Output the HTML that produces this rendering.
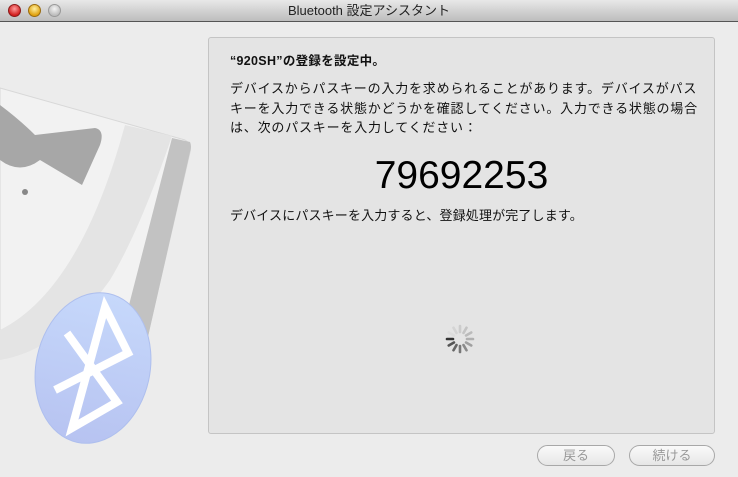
<!DOCTYPE html>
<html><head><meta charset="utf-8"><style>
*{margin:0;padding:0;box-sizing:border-box}
body{width:738px;height:477px;overflow:hidden;background:#ececec;font-family:"Liberation Sans","Noto Sans CJK JP",sans-serif;position:relative}
.tb{position:absolute;left:0;top:0;width:738px;height:22px;background:linear-gradient(#e8e8e8,#bdbdbd);border-bottom:1px solid #555;text-align:center;font-size:13px;line-height:22px;color:#222}
.dot{position:absolute;top:4px;width:13px;height:13px;border-radius:50%}
.panel{position:absolute;left:208px;top:37px;width:507px;height:397px;background:#e4e4e4;border:1px solid #c4c4c4;border-radius:3px}
.t{position:absolute;left:230px;font-size:13px;color:#111;white-space:nowrap;letter-spacing:0.8px}
.btn{position:absolute;top:445px;height:21px;border:1px solid #a8a8a8;border-radius:11px;background:linear-gradient(#fafafa,#e6e6e6);text-align:center;font-size:13px;line-height:19px;color:#999}
</style></head><body>
<div class="tb">Bluetooth 設定アシスタント</div>
<div class="dot" style="left:8px;background:radial-gradient(circle at 50% 35%,#ff9c9c,#d21f1f 70%);border:1px solid #8b1a1a"></div>
<div class="dot" style="left:28px;background:radial-gradient(circle at 50% 35%,#fff0a0,#e0a210 70%);border:1px solid #9a6c10"></div>
<div class="dot" style="left:48px;background:radial-gradient(circle at 50% 35%,#f4f4f4,#bdbdbd 70%);border:1px solid #999"></div>
<svg style="position:absolute;left:0;top:60px" width="208" height="417">
<defs><linearGradient id="bg" x1="0" y1="0" x2="0" y2="1"><stop offset="0" stop-color="#c6d8fb"/><stop offset="1" stop-color="#b7c3f1"/></linearGradient></defs>
<path d="M0 28 L185 80 Q192 84 190 92 L142 300 L0 270 Z" fill="#f2f2f2" stroke="#d8d8d8"/>
<path d="M172 78 L190 82 Q192 86 190 92 L145 290 L120 280 Z" fill="#c2c2c2"/>
<path d="M125 65 L172 76 Q140 170 110 220 Q60 290 0 300 L0 270 Q80 230 125 65Z" fill="#e4e4e4"/>
<path d="M0 45 Q20 60 35 75 L95 68 Q105 70 100 85 L82 125 L40 100 Q20 115 0 100 Z" fill="#a7a7a7"/>
<circle cx="25" cy="132" r="3" fill="#888"/>
<ellipse cx="93" cy="308" rx="57" ry="76" transform="rotate(12 93 308)" fill="url(#bg)" stroke="#aebfee"/>
<path d="M67 273 L117 342 L72 368 L105 247 L128 293 L55 330" fill="none" stroke="#fff" stroke-width="8" stroke-linejoin="miter"/>
</svg>
<div class="panel"></div>
<div class="t" style="top:50px;font-weight:bold;font-size:12.5px;letter-spacing:0.3px">“920SH”の登録を設定中。</div>
<div class="t" style="top:79px;line-height:19.5px">デバイスからパスキーの入力を求められることがあります。デバイスがパス<br>キーを入力できる状態かどうかを確認してください。入力できる状態の場合<br>は、次のパスキーを入力してください：</div>
<div style="position:absolute;left:208px;width:507px;top:154px;text-align:center;font-size:39px;color:#000">79692253</div>
<div class="t" style="top:205px;letter-spacing:0.15px">デバイスにパスキーを入力すると、登録処理が完了します。</div>
<svg style="position:absolute;left:443px;top:322px" width="34" height="34" viewBox="-17 -17 34 34">
<g stroke-width="2.6" stroke-linecap="round">
<line x1="0" y1="-7" x2="0" y2="-13" stroke="#ccc" transform="rotate(0)"/>
<line x1="0" y1="-7" x2="0" y2="-13" stroke="#c4c4c4" transform="rotate(30)"/>
<line x1="0" y1="-7" x2="0" y2="-13" stroke="#bbb" transform="rotate(60)"/>
<line x1="0" y1="-7" x2="0" y2="-13" stroke="#b0b0b0" transform="rotate(90)"/>
<line x1="0" y1="-7" x2="0" y2="-13" stroke="#a0a0a0" transform="rotate(120)"/>
<line x1="0" y1="-7" x2="0" y2="-13" stroke="#8a8a8a" transform="rotate(150)"/>
<line x1="0" y1="-7" x2="0" y2="-13" stroke="#777" transform="rotate(180)"/>
<line x1="0" y1="-7" x2="0" y2="-13" stroke="#666" transform="rotate(210)"/>
<line x1="0" y1="-7" x2="0" y2="-13" stroke="#555" transform="rotate(240)"/>
<line x1="0" y1="-7" x2="0" y2="-13" stroke="#333" transform="rotate(270)"/>
<line x1="0" y1="-7" x2="0" y2="-13" stroke="#ddd" transform="rotate(300)"/>
<line x1="0" y1="-7" x2="0" y2="-13" stroke="#d4d4d4" transform="rotate(330)"/>
</g></svg>
<div class="btn" style="left:537px;width:78px">戻る</div>
<div class="btn" style="left:629px;width:86px">続ける</div>
</body></html>
